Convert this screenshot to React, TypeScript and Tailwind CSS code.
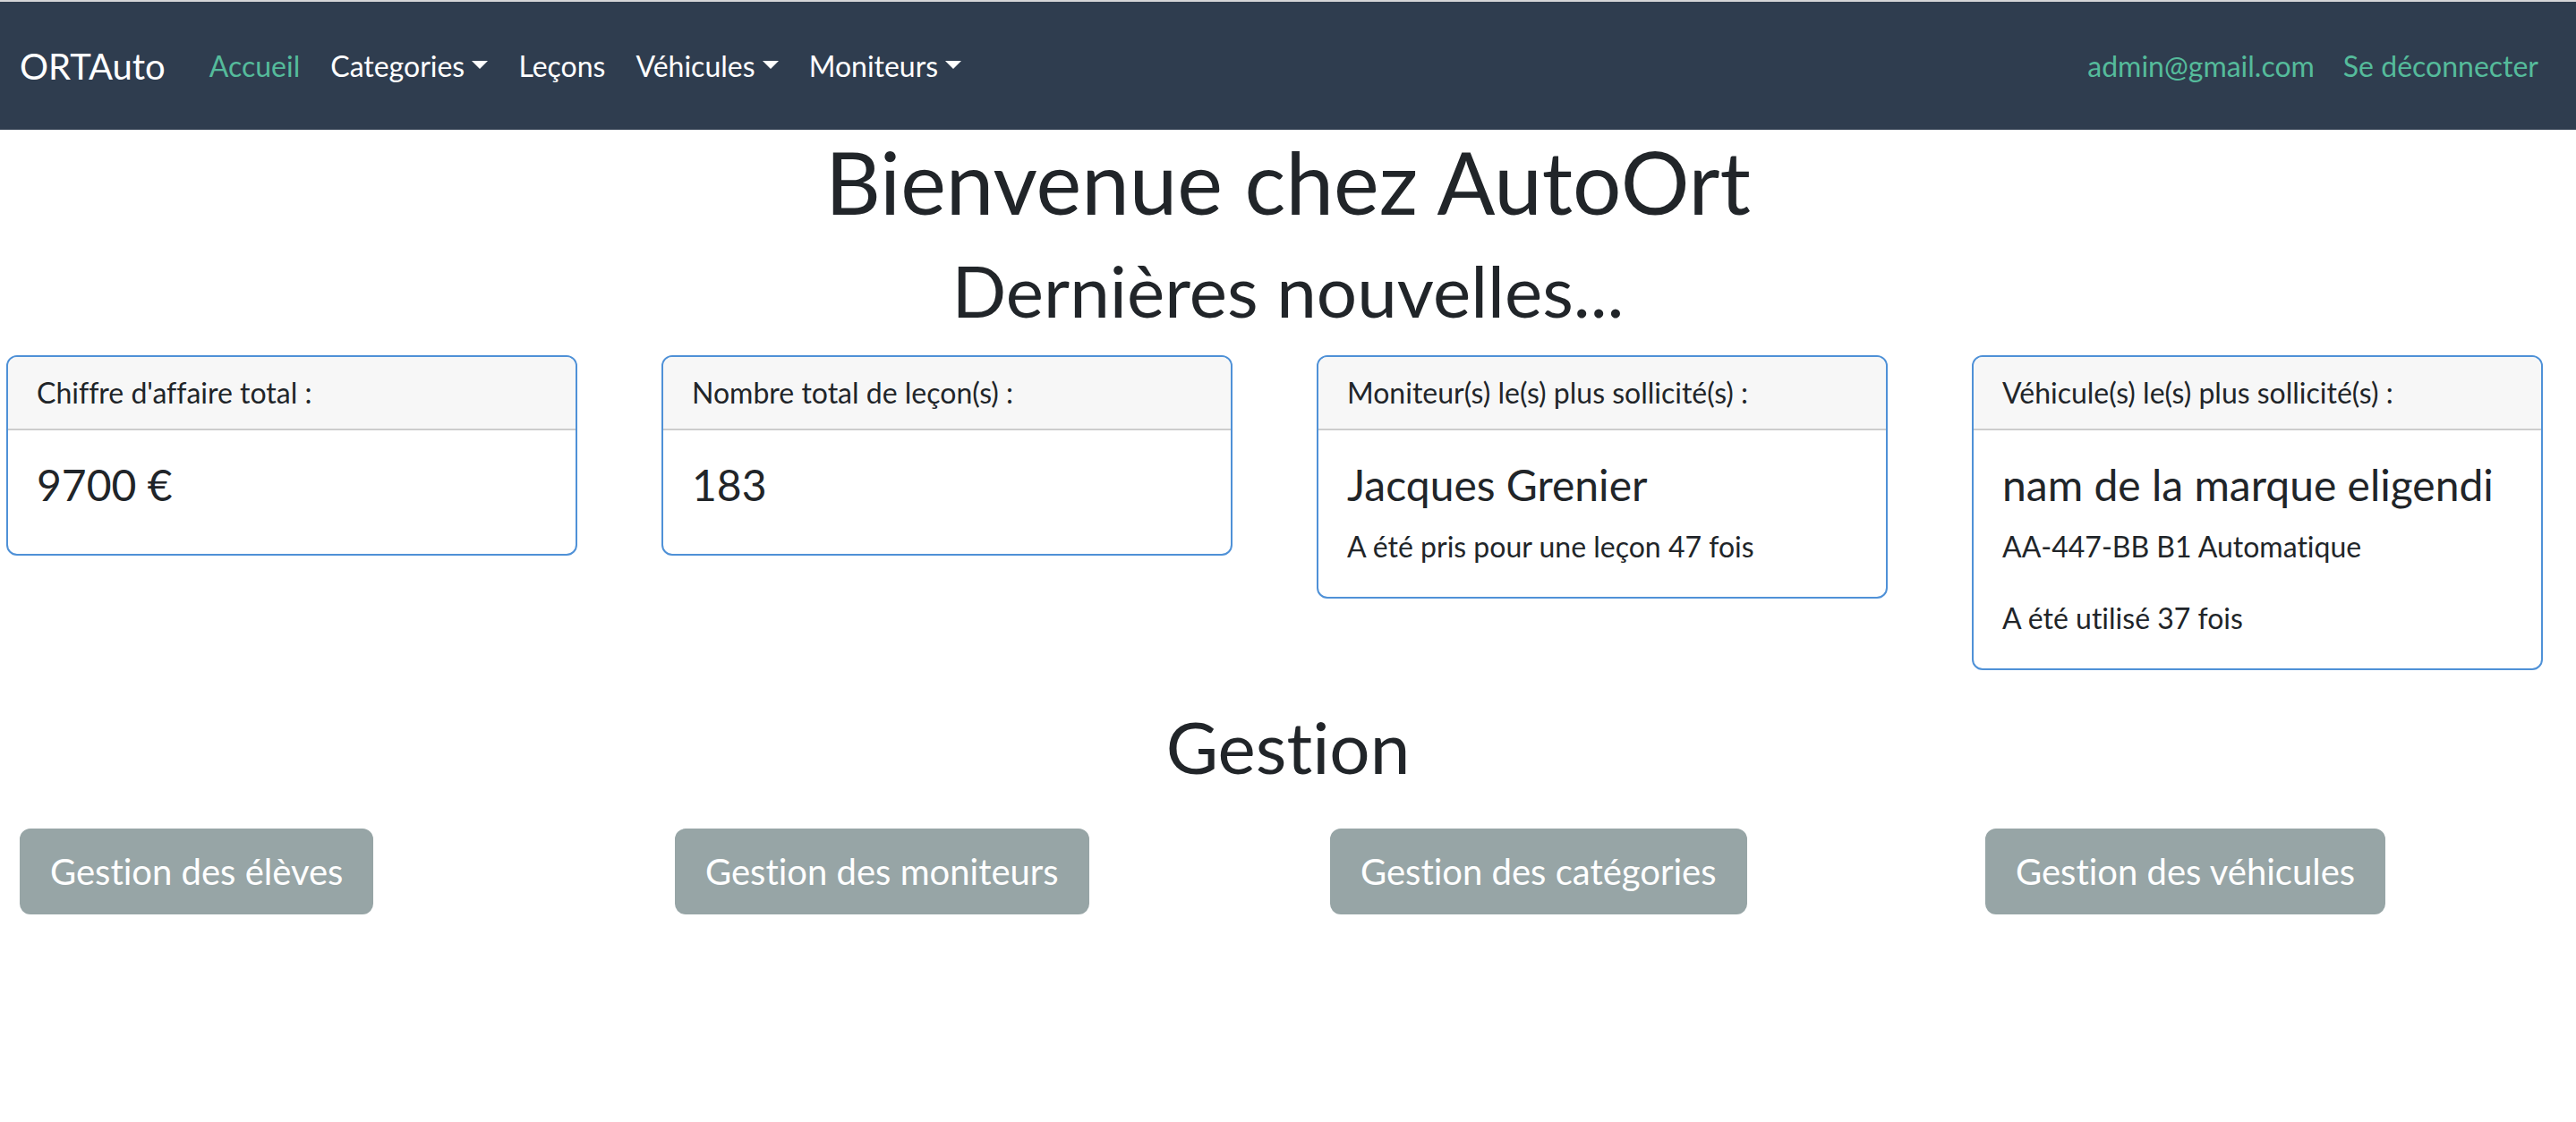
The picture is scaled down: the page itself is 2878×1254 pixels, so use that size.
import { ReactNode } from 'react'

const navLinks = [
  { label: 'Accueil', active: true },
  { label: 'Categories', dropdown: true },
  { label: 'Leçons' },
  { label: 'Véhicules', dropdown: true },
  { label: 'Moniteurs', dropdown: true },
]

function Caret() {
  return (
    <span className="inline-block w-0 h-0 ml-[0.255em] align-[0.255em] border-t-[0.3em] border-x-[0.3em] border-t-white border-x-transparent" />
  )
}

function Card({ title, children }: { title: string; children: ReactNode }) {
  return (
    <div className="border-2 border-[#4f91d7] rounded-[12px] overflow-hidden bg-white">
      <div className="bg-[#f7f7f7] border-b-2 border-[#cdcdcd] px-[32px] py-[16px] text-[32px] leading-[48px]">
        {title}
      </div>
      <div className="p-[32px]">{children}</div>
    </div>
  )
}

function CardTitle({ children }: { children: ReactNode }) {
  return <h4 className="text-[48px] leading-[1.2] mb-[16px]">{children}</h4>
}

export default function App() {
  return (
    <div className="min-h-screen bg-white text-[#212529] font-['Lato','Noto_Sans',sans-serif] [font-variant-ligatures:none]">
      <div className="h-[2px] bg-[#d5d6d8]" />
      <nav className="h-[143px] bg-[#2f3d4f] flex items-center justify-between pl-[22px] pr-[26px]">
        <div className="flex items-center">
          <a className="text-white text-[40px] leading-[60px] mr-[32px]">ORTAuto</a>
          <ul className="flex items-center">
            {navLinks.map((l) => (
              <li key={l.label}>
                <a
                  className={`block px-[17px] text-[32px] leading-[48px] ${
                    l.active ? 'text-[#55bb9b]' : 'text-white'
                  }`}
                >
                  {l.label}
                  {l.dropdown && <Caret />}
                </a>
              </li>
            ))}
          </ul>
        </div>
        <ul className="flex items-center">
          <li>
            <a className="block px-[16px] text-[32px] leading-[48px] text-[#55bb9b]">admin@gmail.com</a>
          </li>
          <li>
            <a className="block px-[16px] text-[32px] leading-[48px] text-[#55bb9b]">Se déconnecter</a>
          </li>
        </ul>
      </nav>

      <main>
        <h1 className="text-center text-[96px] leading-[1.2] mb-[16px]">Bienvenue chez AutoOrt</h1>
        <h2 className="text-center text-[80px] leading-[1.2] mb-[16px]">Dernières nouvelles...</h2>

        <div className="grid grid-cols-[repeat(4,638px)] gap-x-[94px] items-start pl-[7px] mt-[25px]">
          <Card title="Chiffre d'affaire total :">
            <CardTitle>9700 €</CardTitle>
          </Card>
          <Card title="Nombre total de leçon(s) :">
            <CardTitle>183</CardTitle>
          </Card>
          <Card title="Moniteur(s) le(s) plus sollicité(s) :">
            <CardTitle>Jacques Grenier</CardTitle>
            <p className="text-[32px] leading-[48px]">A été pris pour une leçon 47 fois</p>
          </Card>
          <Card title="Véhicule(s) le(s) plus sollicité(s) :">
            <CardTitle>nam de la marque eligendi</CardTitle>
            <p className="text-[32px] leading-[48px] mb-[32px]">AA-447-BB B1 Automatique</p>
            <p className="text-[32px] leading-[48px]">A été utilisé 37 fois</p>
          </Card>
        </div>

        <h2 className="text-center text-[80px] leading-[1.2] mt-[37px] mb-[44px]">Gestion</h2>

        <div className="grid grid-cols-[repeat(4,638px)] gap-x-[94px] items-start pl-[22px]">
          {['Gestion des élèves', 'Gestion des moniteurs', 'Gestion des catégories', 'Gestion des véhicules'].map(
            (b) => (
              <div key={b}>
                <button className="bg-[#97a5a6] border-2 border-[#97a5a6] text-white text-[40px] leading-[60px] px-[32px] py-[16px] rounded-[12px]">
                  {b}
                </button>
              </div>
            )
          )}
        </div>
      </main>
    </div>
  )
}
